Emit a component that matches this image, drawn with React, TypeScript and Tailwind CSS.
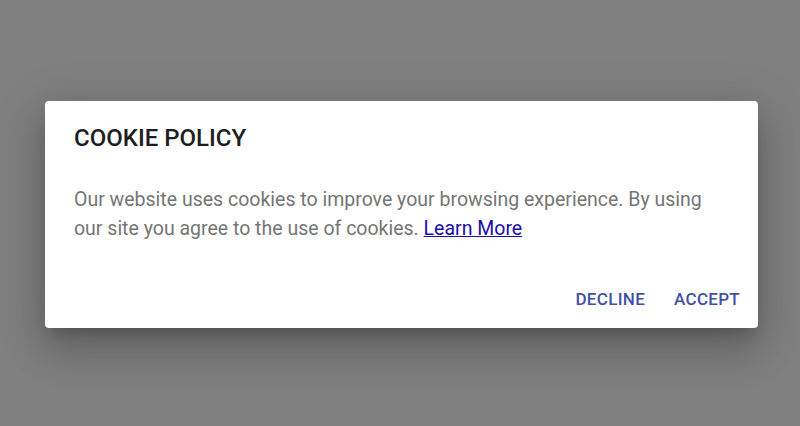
export default function App() {
  return (
    <div className="w-[800px] h-[426px] bg-[#808080] flex items-start justify-start pl-[45px] pt-[101px]" style={{ fontFamily: "Roboto, 'Liberation Sans', sans-serif" }}>
      <div className="w-[713px] h-[227px] bg-white rounded-[4px] shadow-[0_24px_38px_3px_rgba(0,0,0,0.14),0_9px_46px_8px_rgba(0,0,0,0.12),0_11px_15px_-7px_rgba(0,0,0,0.2)] flex flex-col">
        <h2 className="pl-[29px] pt-[21px] text-[24px] leading-[32px] font-medium text-[#1e1e1e]">COOKIE POLICY</h2>
        <p className="pl-[29px] pr-[30px] mt-[31px] text-[19.5px] leading-[29px] text-[#757575]">
          Our website uses cookies to improve your browsing experience. By using our site you agree to the use of cookies.{" "}
          <a href="#" className="text-[#1a0dab] underline leading-[24px]">Learn More</a>
        </p>
        <div className="flex justify-end gap-[29px] pr-[18px] mt-auto mb-[16px]">
          <button className="text-[17px] font-medium tracking-[0.3px] text-[#3f51a5]">DECLINE</button>
          <button className="text-[17px] font-medium tracking-[0.3px] text-[#3f51a5]">ACCEPT</button>
        </div>
      </div>
    </div>
  );
}
